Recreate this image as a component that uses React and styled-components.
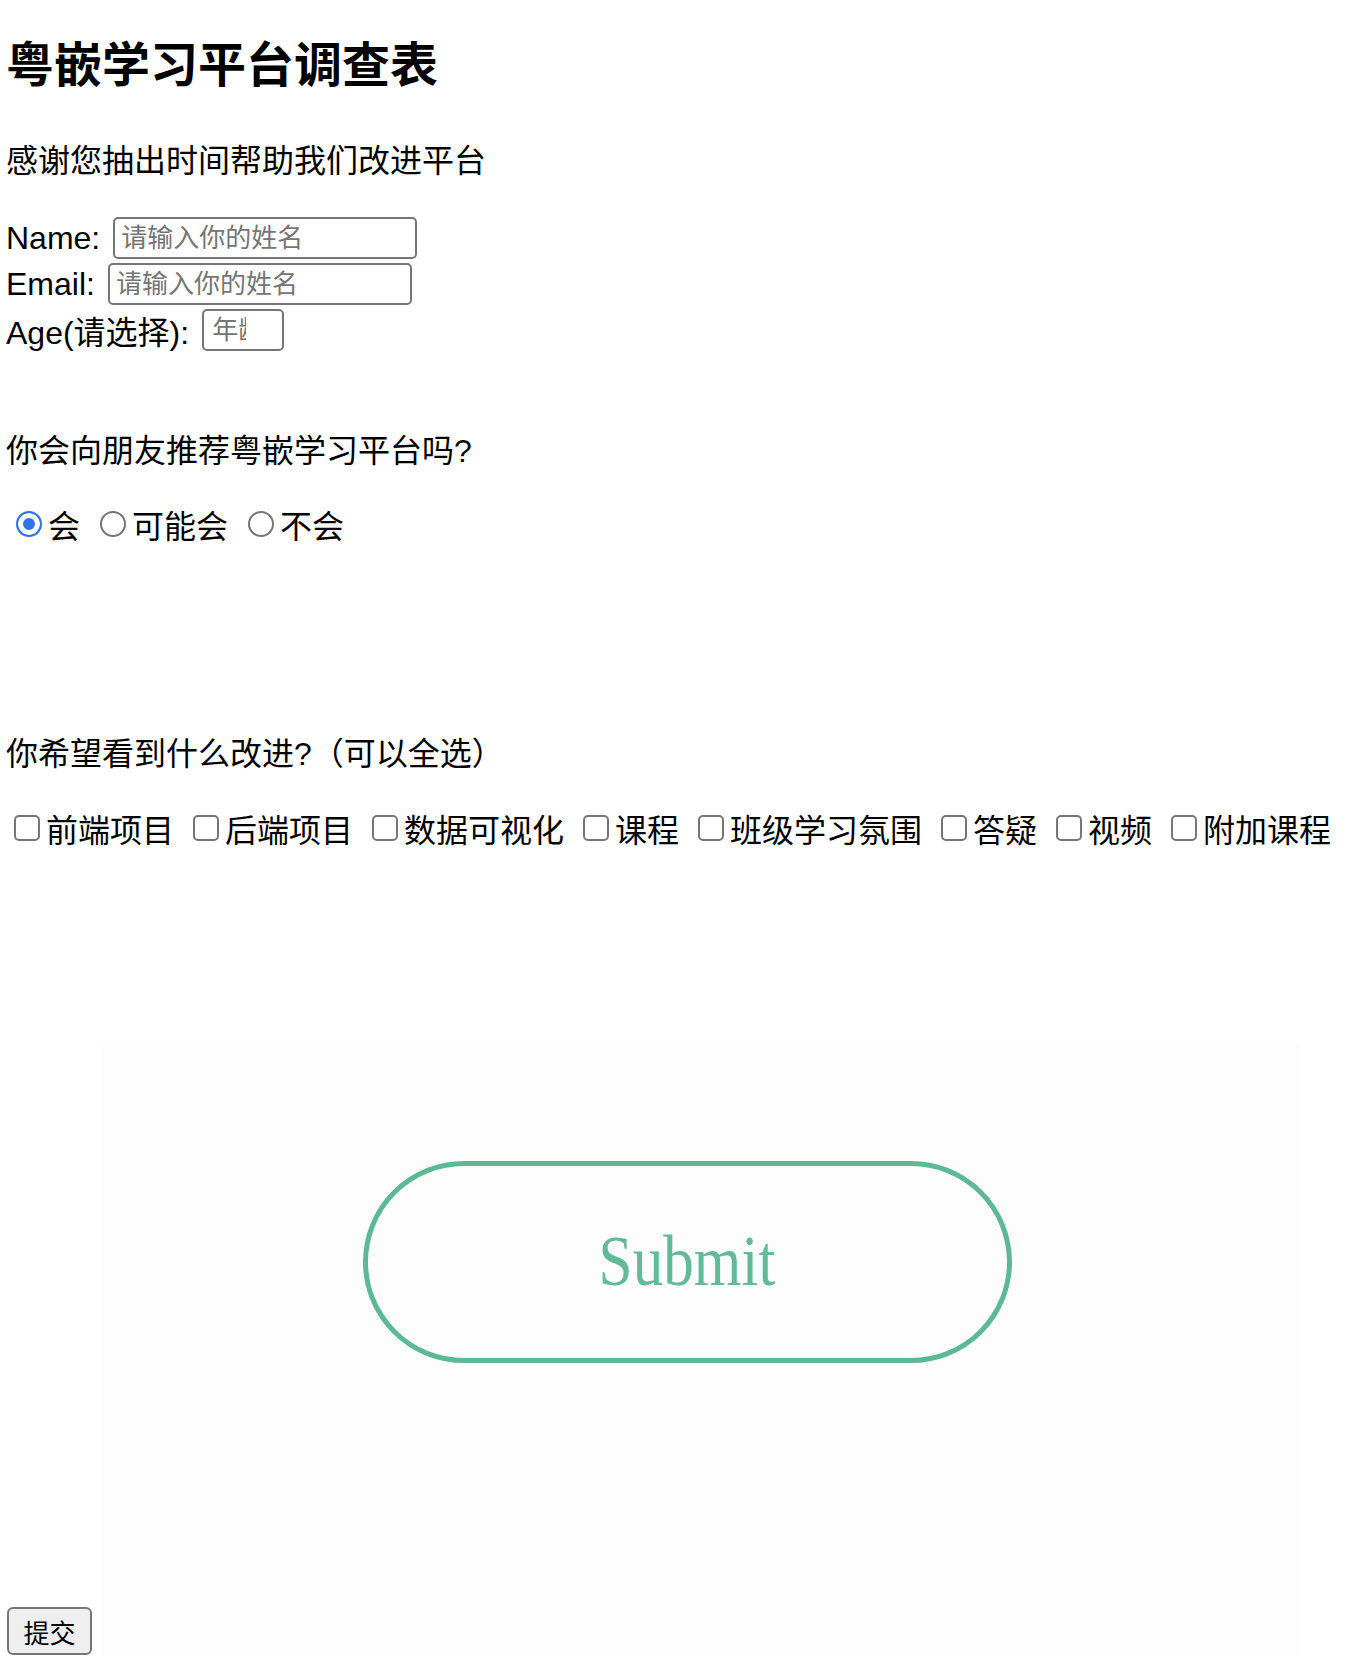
import React from 'react';
import styled, { createGlobalStyle } from 'styled-components';

const GlobalStyle = createGlobalStyle`
  body {
    margin: 0;
    background: #ffffff;
    color: #000000;
    font-family: "Liberation Sans", "Noto Sans CJK SC", sans-serif;
  }
`;

const Page = styled.div`
  padding: 0 0 0 6px;
`;

const Title = styled.h1`
  margin: 38px 0 0;
  font-size: 48px;
  line-height: 56px;
  font-weight: 700;
`;

const Intro = styled.p`
  margin: 47px 0 0;
  font-size: 32px;
  line-height: 40px;
`;

const Form = styled.form`
  display: flex;
  flex-direction: column;
`;

const Fields = styled.div`
  margin-top: 34px;
  display: flex;
  flex-direction: column;
`;

const FieldRow = styled.label`
  display: flex;
  align-items: center;
  gap: 13px;
  height: 46px;
  font-size: 32px;
`;

const TextInput = styled.input`
  box-sizing: border-box;
  width: ${props => props.$width}px;
  height: 42px;
  padding: 0 ${props => props.$padRight || 6}px 0 ${props => props.$padLeft || 6}px;
  border: 2px solid #767676;
  border-radius: 5px;
  font-family: "Liberation Sans", "Noto Sans CJK SC", sans-serif;
  font-size: 26px;
  color: #000;
  background: #fff;
  outline: none;

  &::placeholder {
    color: #757575;
  }
`;

const Question = styled.p`
  margin: ${props => props.$top}px 0 0;
  font-size: 32px;
  line-height: 40px;
`;

const OptionRow = styled.div`
  margin-top: ${props => props.$top}px;
  display: flex;
  align-items: center;
  gap: ${props => props.$gap}px;
  height: 40px;
  font-size: 32px;
`;

const Option = styled.label`
  display: inline-flex;
  align-items: center;
  white-space: nowrap;
`;

const Radio = styled.input.attrs({ type: 'radio' })`
  appearance: none;
  box-sizing: border-box;
  width: 26px;
  height: 26px;
  margin: 0 6px 0 10px;
  border: 2px solid #767676;
  border-radius: 50%;
  background: #fff;

  &:checked {
    border-color: #2f74ed;
    background: #2f74ed;
    box-shadow: inset 0 0 0 5px #ffffff;
  }
`;

const Checkbox = styled.input.attrs({ type: 'checkbox' })`
  appearance: none;
  box-sizing: border-box;
  width: 26px;
  height: 26px;
  margin: 0 6px 0 8px;
  border: 2px solid #767676;
  border-radius: 5px;
  background: #fff;
`;

const SubmitRow = styled.div`
  margin-top: 194px;
  display: flex;
  align-items: flex-end;
  gap: 10px;
  margin-left: 1px;
`;

const PlainButton = styled.button`
  box-sizing: border-box;
  width: 85px;
  height: 48px;
  margin-bottom: 2px;
  padding: 0;
  border: 2px solid #767676;
  border-radius: 6px;
  background: #efefef;
  font-family: "Liberation Sans", "Noto Sans CJK SC", sans-serif;
  font-size: 26px;
  color: #000;
`;

const ImageButton = styled.div`
  box-sizing: border-box;
  width: 1198px;
  height: 615px;
  padding: 119px 0 0 261px;
  background: #fdfdfe;
`;

const Pill = styled.div`
  box-sizing: border-box;
  width: 649px;
  height: 202px;
  border: 5px solid #5cb993;
  border-radius: 101px;
  display: flex;
  align-items: center;
  justify-content: center;
`;

const PillText = styled.span`
  font-family: "Liberation Serif", serif;
  font-size: 72px;
  line-height: 1;
  color: #62ba96;
  transform: scaleX(0.85);
  margin-top: -2px;
`;

const radios = [
  { label: '会', checked: true },
  { label: '可能会' },
  { label: '不会' },
];

const improvements = ['前端项目', '后端项目', '数据可视化', '课程', '班级学习氛围', '答疑', '视频', '附加课程'];

export default function App() {
  return (
    <Page>
      <GlobalStyle />
      <Title>粤嵌学习平台调查表</Title>
      <Intro>感谢您抽出时间帮助我们改进平台</Intro>
      <Form onSubmit={e => e.preventDefault()}>
        <Fields>
          <FieldRow>
            Name:
            <TextInput $width={304} placeholder="请输入你的姓名" />
          </FieldRow>
          <FieldRow>
            Email:
            <TextInput $width={304} placeholder="请输入你的姓名" />
          </FieldRow>
          <FieldRow>
            Age(请选择):
            <TextInput $width={82} $padLeft={8} $padRight={36} placeholder="年龄" />
          </FieldRow>
        </Fields>

        <Question $top={78}>你会向朋友推荐粤嵌学习平台吗?</Question>
        <OptionRow $top={33} $gap={10}>
          {radios.map(r => (
            <Option key={r.label}>
              <Radio name="recommend" defaultChecked={r.checked} />
              {r.label}
            </Option>
          ))}
        </OptionRow>

        <Question $top={190}>你希望看到什么改进?（可以全选）</Question>
        <OptionRow $top={34} $gap={11}>
          {improvements.map(item => (
            <Option key={item}>
              <Checkbox name="improve" />
              {item}
            </Option>
          ))}
        </OptionRow>

        <SubmitRow>
          <PlainButton type="submit">提交</PlainButton>
          <ImageButton role="button" aria-label="Submit">
            <Pill>
              <PillText>Submit</PillText>
            </Pill>
          </ImageButton>
        </SubmitRow>
      </Form>
    </Page>
  );
}
